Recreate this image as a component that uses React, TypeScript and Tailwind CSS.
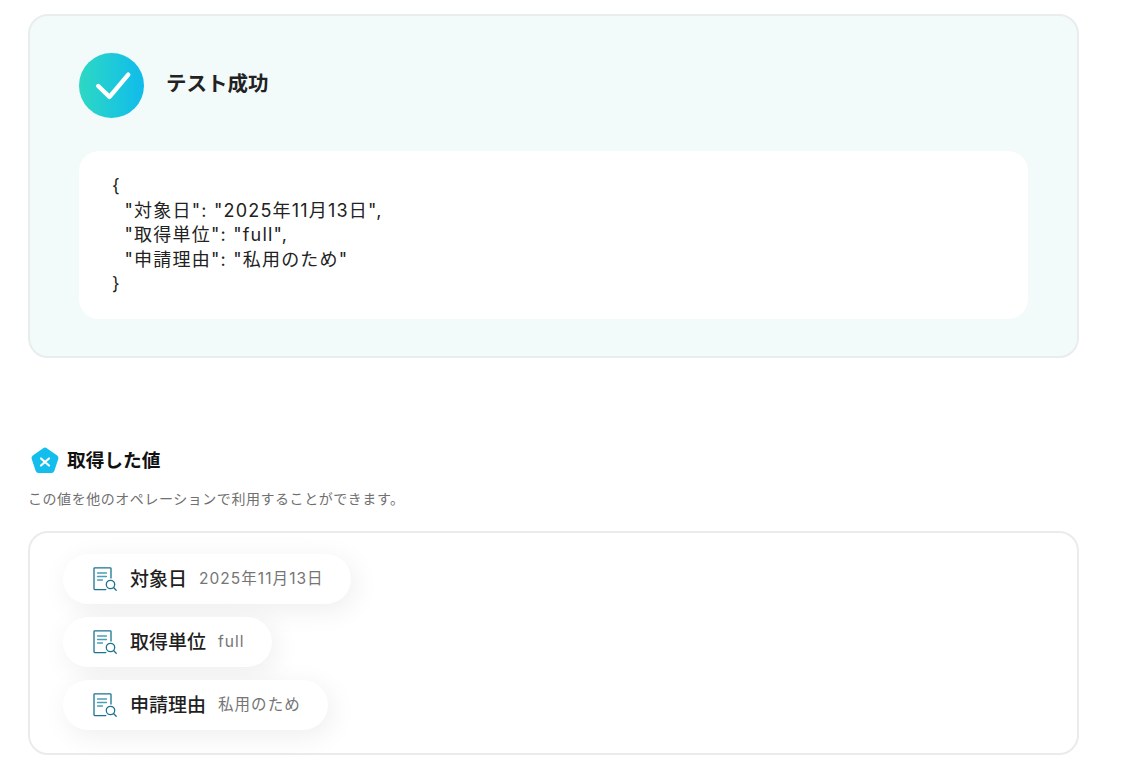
const FONT = "font-['Inter','Noto_Sans_CJK_JP',sans-serif]"

const DocSearchIcon = () => (
    <svg width="26" height="26" viewBox="0 0 26 26" fill="none" stroke="#1a7391" strokeWidth="1.3" strokeLinecap="round">
        <path d="M19 12V2.600a.8.8 0 0 0-.8-.8H2.800a.8.8 0 0 0-.8.8v20.200a.8.8 0 0 0 .8.8h11" />
        <path d="M5.500 7h9M5.500 10.500h9M5.500 14h5" stroke="#4a9fb5" />
        <circle cx="18.500" cy="18.500" r="4.200" />
        <path d="M21.500 21.500l2.700 2.700" />
    </svg>
)

const ValuePill = ({ label, value }: { label: string; value: string }) => (
    <div className="flex h-[50px] w-fit items-center rounded-full bg-white pl-[29px] pr-[27px] shadow-[4px_6px_28px_rgba(0,0,0,0.07)]">
        <DocSearchIcon />
        <span className="ml-[12px] text-[19px] font-medium leading-none text-[#1f1f1f]">{label}</span>
        <span className="ml-3 text-[15.5px] tracking-[1.050px] text-[#757575]">{value}</span>
    </div>
)

const App = () => {
    return (
        <div className={`${FONT} h-[770px] w-[1122px] overflow-hidden bg-white pl-[28px] pt-[14px]`}>
            {/* Test result */}
            <section className="h-[344px] w-[1051px] rounded-[20px] border-2 border-[#e9eded] bg-[#f2fafa] pl-[49px] pt-[37px]">
                <div className="flex items-center gap-[22px]">
                    <div className="flex h-[65px] w-[65px] items-center justify-center rounded-full bg-gradient-to-r from-[#2ed8c3] to-[#10bbeb]">
                        <svg width="65" height="65" viewBox="0 0 66 66" fill="none" stroke="#fff" strokeWidth="4.500" strokeLinecap="round" strokeLinejoin="round">
                            <path d="M19.500 33.500L31 44.500L50 22" />
                        </svg>
                    </div>
                    <h2 className="pb-[3px] text-[20.500px] font-semibold leading-none text-[#222]">テスト成功</h2>
                </div>
                <pre className={`${FONT} mt-[33px] h-[168px] w-[949px] rounded-[20px] bg-white pl-[33px] pt-[23px] text-[18px] leading-[24.500px] tracking-[1.200px] text-[#222]`}>
{`{
  "対象日": "2025年11月13日",
  "取得単位": "full",
  "申請理由": "私用のため"
}`}
                </pre>
            </section>

            {/* Output values */}
            <div className="mt-[88px] flex items-center gap-[7px] pl-[2px]">
                <svg width="30" height="30" viewBox="0 0 30 30">
                    <path d="M13.200 2.200a3 3 0 0 1 3.600 0l10.400 7.400a3 3 0 0 1 1.100 3.400l-4 12a3 3 0 0 1-2.800 2H8.500a3 3 0 0 1-2.800-2l-4-12a3 3 0 0 1 1.100-3.400z" fill="#13bdec" />
                    <path d="M11 12.500l8 7M19 12.500l-8 7" stroke="#fff" strokeWidth="2.200" strokeLinecap="round" fill="none" />
                </svg>
                <h3 className="text-[18.700px] font-semibold leading-none text-[#111]">取得した値</h3>
            </div>
            <p className="mt-[13px] text-[14px] leading-[20px] tracking-[0.550px] text-[#707070]">この値を他のオペレーションで利用することができます。</p>
            <section className="mt-[22px] flex h-[224px] w-[1051px] flex-col gap-[13px] rounded-[20px] border-2 border-[#ebebeb] bg-white pl-[33px] pt-[21px]">
                <ValuePill label="対象日" value="2025年11月13日" />
                <ValuePill label="取得単位" value="full" />
                <ValuePill label="申請理由" value="私用のため" />
            </section>
        </div>
    )
}

export default App
